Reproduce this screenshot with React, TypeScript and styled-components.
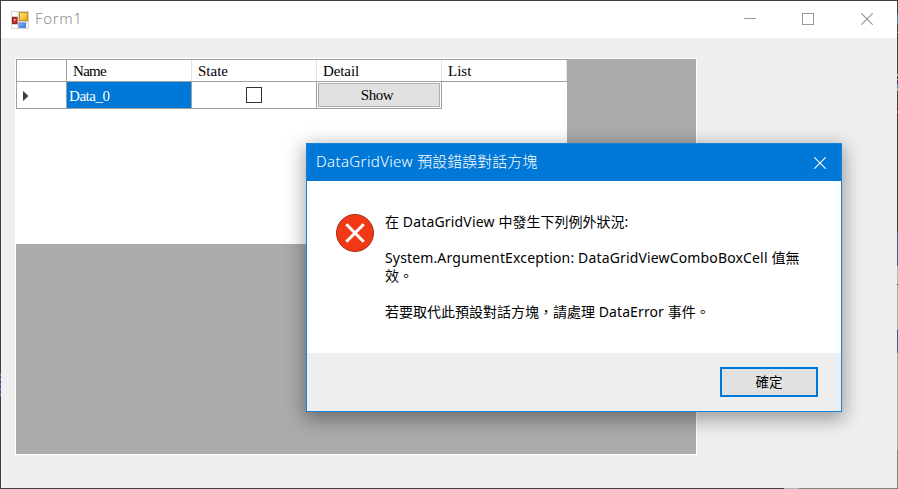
import React from "react";
import styled, { createGlobalStyle } from "styled-components";

const UI_FONT = '"Noto Sans", "Noto Sans CJK TC", sans-serif';
const GRID_FONT = '"Liberation Serif", serif';

const GlobalStyle = createGlobalStyle`
  * { box-sizing: border-box; }
  body { margin: 0; overflow: hidden; }
`;

/* The one-pixel frame shows slivers of the desktop behind the window. */
const Window = styled.div`
  position: relative;
  width: 898px;
  height: 489px;
  display: flex;
  flex-direction: column;
  padding: 1px;
  background:
    linear-gradient(#403e44 0 14px, #3b8ea5 14px 24px, #403e44 24px 32px, #999 32px 33px,
      #403e44 33px 74px, #8aa 74px 76px, #403e44 76px 79px, #8aa 79px 80px, #403e44 80px 84px,
      #3b8ea5 84px 88px, #8aa 88px 91px, #403e44 91px 111px, #a66a40 111px 113px, #38373a 113px 232px,
      #2f6695 232px 266px, #b4b4b4 266px 284px, #333 284px 285px, #acacac 285px 330px,
      #2f6695 330px 353px, #a9a9a9 353px 450px, #808080 450px) right / 1px 100% no-repeat,
    repeating-linear-gradient(#8062a4 0 3px, #4c4260 3px 5px) 0 373px / 1px 25px no-repeat,
    linear-gradient(90deg, #403e44 0 784px, #b0b4b8 784px 799px, #808080 799px) bottom / 100% 1px no-repeat,
    #403e44;
`;

const TitleBar = styled.header`
  height: 37px;
  flex: none;
  display: flex;
  align-items: center;
  padding: 0 24px 1px 10px;
  background: #fff;
  color: #8c8c8c;
  font: 300 15px/20px ${UI_FONT};
`;

const Caption = styled.span`
  margin: -2px auto 0 6px;
`;

const AppIcon = styled.svg`
  position: relative;
  top: 0.5px;
`;

const WindowButtons = styled.div`
  display: flex;
  gap: 46px;
  svg { display: block; }
  svg:last-child { margin-left: 1px; }
`;

const FormBody = styled.main`
  flex: 1;
  padding: 20px 0 0 14px;
  background: #efefef;
`;

const DataGrid = styled.section`
  width: 682px;
  height: 397px;
  border: 1px solid #fff;
  background: #ababab;
`;

const GridContent = styled.div`
  width: 551px;
  height: 185px;
  background: #fff;
  font: 15px/18px ${GRID_FONT};
  color: #000;
`;

const HeaderRow = styled.div`
  display: grid;
  grid-template-columns: 50px repeat(4, 125px);
  height: 23px;
  border: solid #a0a0a0;
  border-width: 1px 0 1px 1px;
`;

const DataRow = styled.div`
  display: grid;
  grid-template-columns: 50px repeat(3, 125px);
  width: 426px;
  height: 27px;
  border: solid #a0a0a0;
  border-width: 0 0 1px 1px;
`;

const HeaderCell = styled.div<{ $strong?: boolean }>`
  display: flex;
  align-items: center;
  padding-left: 6px;
  border-right: 1px solid ${(p) => (p.$strong ? "#a0a0a0" : "#e3e3e3")};
`;

const Cell = styled.div<{ $selected?: boolean; $center?: boolean }>`
  display: flex;
  align-items: center;
  justify-content: ${(p) => (p.$center ? "center" : "flex-start")};
  padding: ${(p) => (p.$selected ? "1px 0 0 2px" : "0")};
  border-right: 1px solid #a0a0a0;
  background: ${(p) => (p.$selected ? "#0078d7" : "#fff")};
  color: ${(p) => (p.$selected ? "#fff" : "#000")};
`;

const Spaced = styled.span<{ $by: number }>`
  letter-spacing: ${(p) => p.$by}px;
`;

const RowArrow = styled.svg`
  flex: none;
  margin: 2px 0 0 6px;
`;

const CheckBox = styled.span`
  width: 16px;
  height: 16px;
  border: 1px solid #333;
`;

const GridButton = styled.button`
  width: 122px;
  height: 24px;
  margin: 0;
  padding: 0 4px 0 0;
  border: 1px solid #adadad;
  background: #e1e1e1;
  font: inherit;
  color: #000;
`;

const Dialog = styled.section`
  position: absolute;
  left: 306px;
  top: 143px;
  width: 536px;
  height: 269px;
  display: flex;
  flex-direction: column;
  border: 1px solid #1883d7;
  background: #fff;
  box-shadow: 0 5px 18px 2px rgba(0, 0, 0, 0.36);
  font-family: ${UI_FONT};
`;

const DialogTitle = styled.header`
  height: 37px;
  flex: none;
  display: flex;
  align-items: center;
  justify-content: space-between;
  padding: 0 15px 0 9px;
  background: #0078d7;
  color: #fff;
  font-size: 15px;
  font-weight: 300;
`;

const DialogCaption = styled.span`
  margin-top: -4px;
`;

const DialogContent = styled.div`
  flex: 1;
  display: flex;
  padding: 32px 0 0 28px;
`;

const Message = styled.div`
  margin-left: 10px;
  color: #000;
  font-size: 14px;
  line-height: 18px;
`;

const Line = styled.p`
  margin: 0;
  height: 18px;
  white-space: pre;
`;

const DialogFooter = styled.footer`
  height: 58px;
  flex: none;
  display: flex;
  align-items: center;
  justify-content: flex-end;
  padding-right: 23px;
  background: #efefef;
`;

const OkButton = styled.button`
  width: 98px;
  height: 30px;
  padding: 0;
  border: 2px solid #0078d7;
  background: #e1e1e1;
  font: 13.5px/20px ${UI_FONT};
  color: #000;
`;

const COLUMNS = [
  { name: "Name", spacing: -0.7 },
  { name: "State", spacing: 0 },
  { name: "Detail", spacing: -0.1 },
  { name: "List", spacing: 0 },
];

function FormIcon() {
  return (
    <AppIcon width="18" height="18" viewBox="0 0 18 18">
      <defs>
        <linearGradient id="gold" x2="1" y2="1">
          <stop stopColor="#ffe98a" />
          <stop offset="1" stopColor="#e9a800" />
        </linearGradient>
        <linearGradient id="blue" x2="1" y2="1">
          <stop stopColor="#8cc0ff" />
          <stop offset="1" stopColor="#2f6fd8" />
        </linearGradient>
      </defs>
      <rect width="18" height="18" fill="#d4d4d4" />
      <path d="M1 1h5.5v4H1zM1 14h5.5v3H1zM15.5 12H17v5h-1.5z" fill="#fff" />
      <rect x="8.5" y="1.5" width="8" height="8" fill="url(#gold)" stroke="#c98f10" />
      <rect x="1.5" y="6.5" width="4.5" height="6" fill="#c8322c" stroke="#9e1d1d" />
      <rect x="3" y="8" width="1.6" height="2" fill="#f0a090" />
      <rect x="8" y="12" width="6.5" height="4.5" fill="url(#blue)" stroke="#4a80d8" strokeWidth=".8" />
    </AppIcon>
  );
}

export default function App() {
  return (
    <>
      <GlobalStyle />
      <Window>
        <TitleBar>
          <FormIcon />
          <Caption><Spaced $by={0.6}>Form1</Spaced></Caption>
          <WindowButtons>
            <svg width="12" height="12" shapeRendering="crispEdges"><path d="M0 5.5h12" stroke="#999" /></svg>
            <svg width="12" height="12" shapeRendering="crispEdges"><path d="M.5.5h11v11H.5z" fill="none" stroke="#999" /></svg>
            <svg width="12" height="12"><path d="M.3.3l11.4 11.4M11.7.3L.3 11.7" stroke="#909090" strokeWidth="1.1" /></svg>
          </WindowButtons>
        </TitleBar>
        <FormBody>
          <DataGrid>
            <GridContent>
              <HeaderRow>
                <HeaderCell $strong />
                {COLUMNS.map((c) => (
                  <HeaderCell key={c.name}><Spaced $by={c.spacing}>{c.name}</Spaced></HeaderCell>
                ))}
              </HeaderRow>
              <DataRow>
                <Cell><RowArrow width="6" height="10"><path d="M0 0l5.5 5L0 10z" fill="#404040" /></RowArrow></Cell>
                <Cell $selected><Spaced $by={-0.45}>Data_0</Spaced></Cell>
                <Cell $center><CheckBox /></Cell>
                <Cell $center><GridButton><Spaced $by={-0.4}>Show</Spaced></GridButton></Cell>
              </DataRow>
            </GridContent>
          </DataGrid>
        </FormBody>
        <Dialog>
          <DialogTitle>
            <DialogCaption><Spaced $by={0.38}>DataGridView </Spaced>預設錯誤對話方塊</DialogCaption>
            <svg width="12" height="12"><path d="M.3.3l11.4 11.4M11.7.3L.3 11.7" stroke="#fff" strokeWidth="1.1" /></svg>
          </DialogTitle>
          <DialogContent>
            <svg width="40" height="40" viewBox="0 0 40 40">
              <circle cx="20" cy="20" r="18.5" fill="#f03a17" stroke="#a82a14" />
              <path d="M11.3 11.3l17.4 17.4M28.7 11.3L11.3 28.7" stroke="#fff" strokeWidth="3" />
            </svg>
            <Message>
              <Line>在<Spaced $by={0.17}> DataGridView </Spaced>中發生下列例外狀況:</Line>
              <Line />
              <Line><Spaced $by={0.15}>System.ArgumentException: DataGridViewComboBoxCell </Spaced>值無</Line>
              <Line>效。</Line>
              <Line />
              <Line>若要取代此預設對話方塊，請處理<Spaced $by={0.1}> DataError </Spaced>事件。</Line>
            </Message>
          </DialogContent>
          <DialogFooter><OkButton>確定</OkButton></DialogFooter>
        </Dialog>
      </Window>
    </>
  );
}
